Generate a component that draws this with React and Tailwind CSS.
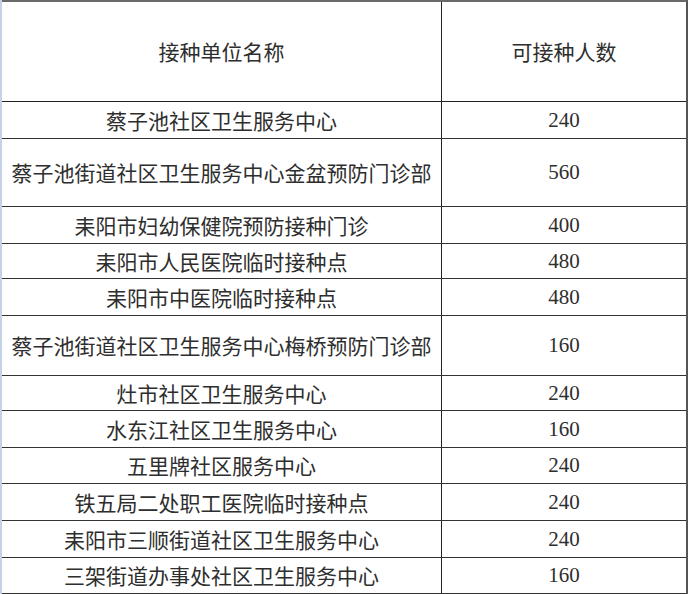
import React from "react";

const rows = [
  { name: "蔡子池社区卫生服务中心", n: "240", h: "h-[37px]" },
  { name: "蔡子池街道社区卫生服务中心金盆预防门诊部", n: "560", h: "h-[68px]" },
  { name: "耒阳市妇幼保健院预防接种门诊", n: "400", h: "h-[37px]" },
  { name: "耒阳市人民医院临时接种点", n: "480", h: "h-[35px]" },
  { name: "耒阳市中医院临时接种点", n: "480", h: "h-[37px]" },
  { name: "蔡子池街道社区卫生服务中心梅桥预防门诊部", n: "160", h: "h-[60px]" },
  { name: "灶市社区卫生服务中心", n: "240", h: "h-[35px]" },
  { name: "水东江社区卫生服务中心", n: "160", h: "h-[37px]" },
  { name: "五里牌社区服务中心", n: "240", h: "h-[36px]" },
  { name: "铁五局二处职工医院临时接种点", n: "240", h: "h-[37px]" },
  { name: "耒阳市三顺街道社区卫生服务中心", n: "240", h: "h-[37px]" },
  { name: "三架街道办事处社区卫生服务中心", n: "160", h: "h-[36px]" },
];

const cjk = "font-['Noto_Sans_CJK_SC','Noto_Sans',sans-serif]";

export default function App() {
  return (
    <div className="flex w-[689px] h-[594px] bg-white text-[21px] leading-none text-[#2e2e2e] overflow-hidden">
      <div className="w-[2px] shrink-0 bg-[#c3d2e4]" />
      <div className="w-[686px] shrink-0 flex flex-col border-t-2 border-t-[#6a6a6a] border-r-2 border-r-[#555]">
        <div className="flex h-[100px] shrink-0 border-b border-b-[#222]">
          <div className={`w-[440px] shrink-0 flex items-center justify-center border-r border-r-[#222] ${cjk}`}>
            接种单位名称
          </div>
          <div className={`flex-1 flex items-center justify-center ${cjk}`}>可接种人数</div>
        </div>
        {rows.map((r, i) => (
          <div key={i} className={`flex shrink-0 ${r.h} border-b border-b-[#333]`}>
            <div className={`w-[440px] shrink-0 flex items-center justify-center border-r border-r-[#222] whitespace-nowrap ${cjk}`}>
              {r.name}
            </div>
            <div className="flex-1 flex items-center justify-center font-['Liberation_Serif',serif]">
              {r.n}
            </div>
          </div>
        ))}
      </div>
    </div>
  );
}
